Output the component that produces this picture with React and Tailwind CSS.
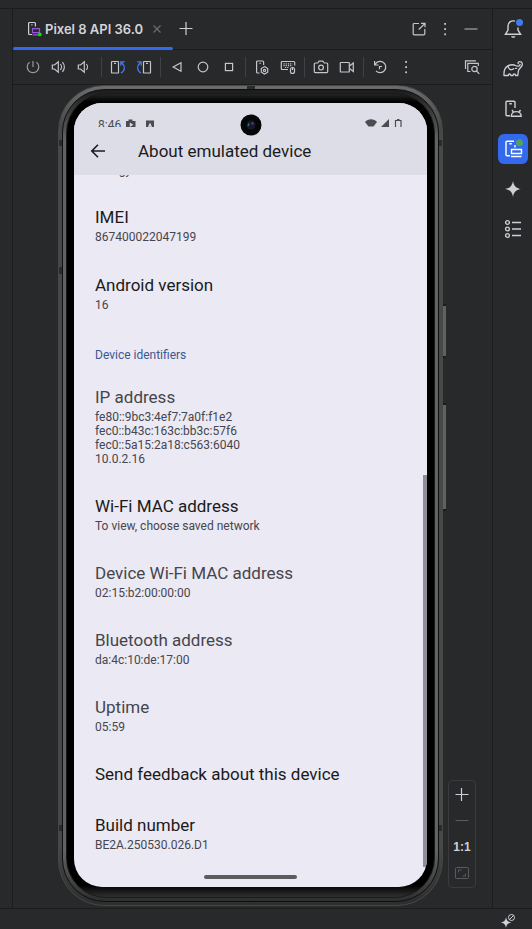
const F = "font-['Roboto','Noto_Sans',sans-serif]";

function Ic({ s = 16, children, className = '', w = 1.2 }) {
  return (
    <svg width={s} height={s} viewBox="0 0 16 16" fill="none" stroke="currentColor" strokeWidth={w} className={className} aria-hidden="true">
      {children}
    </svg>
  );
}

function ToolButton({ label, children, color = 'text-[#c4c6cb]' }) {
  return (
    <button aria-label={label} className={`flex size-4 shrink-0 items-center justify-center ${color}`}>
      {children}
    </button>
  );
}

function Group({ children }) {
  return <div className="flex items-center gap-[10px]">{children}</div>;
}

function Divider() {
  return <span className="h-5 w-px shrink-0 bg-[#404145]" />;
}

function KebabIcon() {
  return (
    <Ic>
      <g fill="currentColor" stroke="none">
        <rect x="7.2" y="2" width="1.8" height="1.8" />
        <rect x="7.2" y="7.2" width="1.8" height="1.8" />
        <rect x="7.2" y="12.4" width="1.8" height="1.8" />
      </g>
    </Ic>
  );
}

function TabHeader() {
  return (
    <header className="flex h-[41px] items-stretch border-b border-[#1b1c1e]">
      <div className="relative flex w-40 items-center gap-[2px] pl-[14px] text-[#ced0d6]">
        <Ic s={16}>
          <path d="M5 13.500H2.500c-.5 0-.9-.4-.9-.9V2.400c0-.5.4-.9.9-.9h5c.5 0 .9.4.9.9V5.500M4.300 3.800h1.200" />
          <path d="M5.500 7.700h7v4h-7zM5.500 13.800h6.500" stroke="#9457d6" />
          <circle cx="12.800" cy="13.400" r="1.900" fill="#0fdd0f" stroke="none" />
        </Ic>
        <span className="whitespace-nowrap text-[13px] leading-5 font-semibold text-[#d3d5da]">Pixel 8 API 36.0</span>
        <button aria-label="Close tab" className="ml-1 flex size-4 items-center justify-center text-[#6b6d72]">
          <Ic><path d="m4.500 4.500 7 7m0-7-7 7" /></Ic>
        </button>
        <span className="absolute inset-x-0 -bottom-px h-[3px] rounded-full bg-[#3369ec]" />
      </div>
      <button aria-label="New tab" className="ml-[3px] flex w-5 items-center justify-center text-[#ced0d6]">
        <Ic w={1.200}><path d="M1.500 7.500h13M8 1v13" /></Ic>
      </button>
      <div className="ml-auto flex items-center gap-[10px] pr-[13px]">
        <ToolButton label="Open in window">
          <Ic><path d="M8 2.500H3.200c-.6 0-1 .4-1 1v9.300c0 .6.4 1 1 1h9.600c.6 0 1-.4 1-1V8M10 2.300h4v4M14 2.300 7.800 8.500" /></Ic>
        </ToolButton>
        <ToolButton label="Options"><KebabIcon /></ToolButton>
        <ToolButton label="Hide" color="text-[#85878c]">
          <Ic w={1.600}><path d="M1.500 8h13" /></Ic>
        </ToolButton>
      </div>
    </header>
  );
}

function Toolbar() {
  return (
    <div className="flex h-[35px] items-center justify-between border-b border-[#1b1c1e] px-3">
      <div className="flex items-center gap-2">
        <Group>
          <ToolButton label="Power" color="text-[#9a9ca1]">
            <Ic><path d="M8 2v6M4.600 3.200a5.800 5.800 0 1 0 6.800 0" /></Ic>
          </ToolButton>
          <ToolButton label="Volume up">
            <Ic><path d="M1.300 6h2.200L7.300 2.800v10.400L3.500 10H1.300zM9.400 5.200c1.400 1.500 1.400 4.100 0 5.600M11.400 3.200c2.600 2.700 2.600 6.900 0 9.600" /></Ic>
          </ToolButton>
          <ToolButton label="Volume down">
            <Ic><path d="M1.300 6h2.200L7.300 2.800v10.400L3.500 10H1.300zM9.400 5.200c1.400 1.500 1.400 4.100 0 5.600" /></Ic>
          </ToolButton>
        </Group>
        <Divider />
        <Group>
          <ToolButton label="Rotate left">
            <Ic>
              <rect x="1.500" y="2.500" width="7" height="11.500" rx=".6" />
              <path d="M4 4.300h2" />
              <path d="M10.800 14c4.200-1.800 5-7 .6-10.300M10.800 6.800V2.800h4" stroke="#3f7cf0" />
            </Ic>
          </ToolButton>
          <ToolButton label="Rotate right">
            <Ic>
              <rect x="7.500" y="2.500" width="7" height="11.500" rx=".6" />
              <path d="M10 4.300h2" />
              <path d="M5.200 14C1 12.200.2 7 4.600 3.700M5.200 6.800V2.800h-4" stroke="#3f7cf0" />
            </Ic>
          </ToolButton>
        </Group>
        <Divider />
        <Group>
          <ToolButton label="Back"><Ic><path d="M12 3.800v8.400L4.200 8z" /></Ic></ToolButton>
          <ToolButton label="Home"><Ic><circle cx="8" cy="8" r="4.800" /></Ic></ToolButton>
          <ToolButton label="Overview"><Ic><rect x="4.400" y="4.400" width="7.200" height="7.200" /></Ic></ToolButton>
        </Group>
        <Divider />
        <Group>
          <ToolButton label="Device settings">
            <Ic>
              <path d="M5.500 14H3.500c-.5 0-.9-.4-.9-.9V2.900c0-.5.4-.9.900-.9h5.200c.5 0 .9.4.9.9V6M5.500 4.300h1.300" />
              <path d="m10.500 7.600 3.200 1.900v3.700l-3.200 1.900-3.200-1.900V9.500z" />
              <circle cx="10.500" cy="11.400" r="1.100" />
            </Ic>
          </ToolButton>
          <ToolButton label="Hardware input">
            <Ic>
              <path d="M8 10.500H2.300c-.6 0-1-.4-1-1v-6c0-.6.4-1 1-1h11.400c.6 0 1 .4 1 1v3" />
              <path d="M3.500 4.800h9M3.500 6.600h9M5 8.500h4" strokeDasharray="1.200 1" />
              <rect x="10.500" y="8.500" width="4" height="6" rx="2" />
              <path d="M12.500 8.500v2.500" />
            </Ic>
          </ToolButton>
        </Group>
        <Divider />
        <Group>
          <ToolButton label="Screenshot">
            <Ic>
              <path d="M1.300 5c0-.6.4-1 1-1h2.400l1.400-1.800h3.800L11.300 4h2.400c.6 0 1 .4 1 1v7.600c0 .6-.4 1-1 1H2.300c-.6 0-1-.4-1-1z" />
              <circle cx="8" cy="8.600" r="2.400" />
            </Ic>
          </ToolButton>
          <ToolButton label="Record screen">
            <Ic><rect x="1.300" y="3.500" width="9" height="9.500" rx=".6" /><path d="m10.500 7 3.800-3v8.500l-3.800-3" /></Ic>
          </ToolButton>
        </Group>
        <Divider />
        <Group>
          <ToolButton label="Restore">
            <Ic><path d="M2.600 2v4h4M3 5.800a5.600 5.600 0 1 1 1 6M7.500 10.200V7.500H10" /></Ic>
          </ToolButton>
          <ToolButton label="More actions"><KebabIcon /></ToolButton>
        </Group>
      </div>
      <ToolButton label="Inspect layout">
        <Ic>
          <path d="M1.500 10V1.800H12M6.500 12.500H3.800V4.300h10.500V7" />
          <circle cx="10.500" cy="10" r="2.700" />
          <path d="m12.500 12 2.800 2.800" />
        </Ic>
      </ToolButton>
    </div>
  );
}

function StatusBar() {
  return (
    <div className="flex h-6 items-start justify-between overflow-hidden px-6 pt-[14px] text-[#4b4b50]">
      <div className="flex items-start">
        <span className="text-[12px] leading-4">8:46</span>
        <svg width="32" height="12" viewBox="0 0 32 12" className="mt-[2px] ml-1" aria-hidden="true">
          <path d="M1 2h2.500V.5h4V2H10.500v8H1zM4.800 3.500v4.500l3.500-2.200z" fill="currentColor" fillRule="evenodd" />
          <path d="M21 1.500h8v9h-8zM25 3.500l-2.500 5.500h1l.5-1.200h2l.5 1.200h1z" fill="currentColor" fillRule="evenodd" />
        </svg>
      </div>
      <svg width="38" height="9" viewBox="0 0 38 9" className="mt-px" aria-hidden="true">
        <path d="M0 4C3 .3 9 .3 12 4L8.500 8.500h-5z" fill="currentColor" />
        <path d="M16 9 24 1v8z" fill="currentColor" />
        <path d="M30.500 9V2.500h5.500V9M32 1.500h2.500" fill="none" stroke="currentColor" strokeWidth="1.200" />
      </svg>
    </div>
  );
}

function Row({ title, lines = [], muted }) {
  return (
    <div className="flex flex-col gap-[2px]">
      <dt className={`text-[17px] leading-[22px] ${muted ? 'text-[#45454d]' : 'text-[#1a1a20]'}`}>{title}</dt>
      {lines.length > 0 && (
        <dd className="text-[12px] leading-[14px] text-[#46464f]">
          {lines.map((l) => <span key={l} className="block">{l}</span>)}
        </dd>
      )}
    </div>
  );
}

function DeviceScreen() {
  return (
    <main className={`relative flex flex-1 flex-col overflow-hidden rounded-[28px] bg-[#ebe9f3] ${F}`}>
      <div className="bg-[#dddde8]">
        <StatusBar />
        <div className="flex h-12 items-center gap-8 pl-4">
          <button aria-label="Navigate up" className="flex size-4 items-center justify-center text-[#1a1a20]">
            <Ic w={1.600}><path d="M15 8H2M8 1.800 1.800 8 8 14.200" /></Ic>
          </button>
          <h1 className="text-[17px] leading-6 text-[#1a1a20]">About emulated device</h1>
        </div>
      </div>
      <div className="h-[2px] overflow-hidden pl-[21px]">
        <p className="-mt-3 text-[12px] leading-[14px] text-[#46464f]">Energy</p>
      </div>
      <dl className="flex flex-col gap-[30px] px-[21px] pt-[29px]">
        <Row title="IMEI" lines={['867400022047199']} />
        <Row title="Android version" lines={['16']} />
      </dl>
      <h2 className="px-[21px] pt-9 pb-6 text-[12px] leading-[14px] text-[#3c5891]">Device identifiers</h2>
      <dl className="flex flex-col gap-[29px] px-[21px]">
        <Row muted title="IP address" lines={['fe80::9bc3:4ef7:7a0f:f1e2', 'fec0::b43c:163c:bb3c:57f6', 'fec0::5a15:2a18:c563:6040', '10.0.2.16']} />
        <Row title="Wi-Fi MAC address" lines={['To view, choose saved network']} />
        <Row muted title="Device Wi-Fi MAC address" lines={['02:15:b2:00:00:00']} />
        <Row muted title="Bluetooth address" lines={['da:4c:10:de:17:00']} />
        <Row muted title="Uptime" lines={['05:59']} />
        <Row title="Send feedback about this device" />
        <Row title="Build number" lines={['BE2A.250530.026.D1']} />
      </dl>
      <span className="mx-auto mt-auto mb-2 h-1 w-[93px] rounded-full bg-[#5c5c60]" />
      <span className="absolute right-0 bottom-5 h-1/2 w-1 bg-[#8f8e96]" />
      <svg width="22" height="22" viewBox="0 0 22 22" className="absolute top-[11px] left-1/2 -translate-x-1/2" aria-hidden="true">
        <circle cx="11" cy="11" r="10.500" fill="#050607" />
        <circle cx="11" cy="11" r="4.500" fill="#171a26" />
        <path d="M9 9.500 8 12" stroke="#3a78a8" strokeWidth="1.200" />
        <circle cx="12.500" cy="9.500" r="1.200" fill="#5b3a80" />
      </svg>
    </main>
  );
}

function Phone() {
  const notch = 'absolute bg-[#2a2b2b]';
  return (
    <div className="relative flex w-full max-w-[385px] flex-col rounded-[46px] border border-[#464747] bg-[linear-gradient(to_bottom,#6c6c6c_0,#474848_40px,#474848_calc(100%-60px),#2c2d2d_100%)] p-[3px]">
      <div className="flex flex-1 flex-col rounded-[43px] border border-[#101010] bg-[linear-gradient(to_bottom,#1c1c1c_0,#626262_50px,#626262_calc(100%-50px),#2e2e2e_100%)] p-[3px]">
        <div className="flex flex-1 flex-col rounded-[40px] border border-[#1a1a1a] bg-[linear-gradient(to_bottom,#242424_0,#000_8px,#000_calc(100%-12px),#303030_100%)] px-[7px] pt-[9px] pb-[10px]">
          <DeviceScreen />
        </div>
      </div>
      <span className={`${notch} top-[54px] left-0 h-[6px] w-[3px]`} />
      <span className={`${notch} top-[54px] right-0 h-[6px] w-[3px]`} />
      <span className={`${notch} top-[181px] left-0 h-[7px] w-[3px]`} />
      <span className={`${notch} bottom-[74px] left-0 h-[6px] w-[3px]`} />
      <span className={`${notch} right-0 bottom-[74px] h-[6px] w-[3px]`} />
      <span className={`${notch} top-0 left-1/2 h-[3px] w-2 -translate-x-1/2`} />
      <span className="absolute top-[218px] -right-1 h-[54px] w-[3px] border-y-2 border-[#1b1b1b] bg-[#606161]" />
      <span className="absolute top-[317px] -right-1 h-[108px] w-[3px] border-y-2 border-[#1b1b1b] bg-[#606161]" />
    </div>
  );
}

function ZoomControls() {
  return (
    <div className="absolute right-4 bottom-5 flex w-7 flex-col items-center gap-[10px] rounded border border-[#3a3b3e] py-[6px] text-[#ced0d6]">
      <button aria-label="Zoom in"><Ic w={1.200}><path d="M1.500 7.500h13M7.500 1v13" /></Ic></button>
      <button aria-label="Zoom out" className="text-[#5a5c61]"><Ic w={1}><path d="M1.500 7.500h13" /></Ic></button>
      <button className="font-['Liberation_Sans',sans-serif] text-[12px] leading-4 font-bold">1:1</button>
      <button aria-label="Fit to screen" className="text-[#5a5c61]">
        <Ic w={1}><rect x="1.500" y="2.500" width="13" height="11" rx="1" /><path d="M4.500 7.500v-2.500h3M11.500 8.500V11h-3" /></Ic>
      </button>
    </div>
  );
}

function SideBar() {
  const b = 'flex size-[30px] items-center justify-center rounded-md';
  return (
    <nav aria-label="Tool windows" className="flex w-10 shrink-0 flex-col items-center gap-[10px] border-l border-[#1b1c1e] pt-[5px] text-[#ced0d6]">
      <button aria-label="Notifications" className={b}>
        <svg width="20" height="20" viewBox="0 0 20 20" fill="none" stroke="currentColor" strokeWidth="1.400" aria-hidden="true">
          <path d="M12 2.200C8 1 5 3.500 5 7v4l-2.600 4.300h15.200L15 11V8.500" />
          <path d="M8 17.300h4.500l-1 1.500H9z" fill="currentColor" stroke="none" />
          <circle cx="16.500" cy="3.600" r="3.500" fill="#3f7cf0" stroke="none" />
        </svg>
      </button>
      <button aria-label="Gradle" className={b}>
        <svg width="20" height="20" viewBox="0 0 20 20" fill="none" stroke="currentColor" strokeWidth="1.300" strokeLinejoin="round" strokeLinecap="round" aria-hidden="true">
          <path d="M15.200 4.700c-.3-1.400.8-2.200 1.900-2.100 1.500.1 2.400 1.400 2.200 3-.3 2.700-3.300 3.400-3.900 6.200l-.6 4.700h-2.300c-.1-2-2.400-2-2.500 0H7.800c-.1-2-2.400-2-2.500 0H1C.7 12.500 2 8.300 5 6.800c2.500-1.200 5.500-1.300 7.500-.3 1.800.9 4.600.9 4.600-1" />
          <path d="M5 7c.2 3.200 3.300 4.700 5.800 2.800M12.600 9.300h1" />
        </svg>
      </button>
      <button aria-label="Device manager" className={b}>
        <svg width="20" height="20" viewBox="0 0 20 20" fill="none" stroke="currentColor" strokeWidth="1.400" aria-hidden="true">
          <path d="M7 16.800H4c-.6 0-1-.4-1-1V3.200c0-.6.4-1 1-1h7c.6 0 1 .4 1 1V9M6.300 4.800h2.500" />
          <path d="M8.300 17.300c0-6.300 9.900-6.300 9.900 0zM10.300 13 9 11M16.200 13l1.300-2" />
        </svg>
      </button>
      <button aria-label="Running devices" className={`${b} bg-[#3369ec]`}>
        <svg width="20" height="20" viewBox="0 0 20 20" fill="none" stroke="#fff" strokeWidth="1.400" aria-hidden="true">
          <path d="M7 16.800H4c-.6 0-1-.4-1-1V3.200c0-.6.4-1 1-1h7M6.300 4.800h2.500M12 6v2.500" />
          <path d="M8.500 10.500h10v4h-10zM8 17.500h10.500" />
          <circle cx="16.500" cy="3.800" r="3.500" fill="#55a05a" stroke="none" />
        </svg>
      </button>
      <button aria-label="Gemini" className={b}>
        <svg width="16" height="16" viewBox="0 0 16 16" fill="currentColor" aria-hidden="true">
          <path d="M8 0c.8 5 3 7.200 8 8-5 .8-7.200 3-8 8-.8-5-3-7.200-8-8 5-.8 7.200-3 8-8z" />
        </svg>
      </button>
      <button aria-label="Structure" className={b}>
        <svg width="18" height="20" viewBox="0 0 18 20" fill="none" stroke="currentColor" strokeWidth="1.400" aria-hidden="true">
          <circle cx="3.500" cy="3.500" r="1.900" /><circle cx="3.500" cy="10" r="1.900" /><circle cx="3.500" cy="16.500" r="1.900" />
          <path d="M8 3.500h9M8 10h9M8 16.500h9" />
        </svg>
      </button>
    </nav>
  );
}

export default function App() {
  return (
    <div className="flex min-h-screen flex-col bg-[#28292b] font-['Inter','Liberation_Sans',sans-serif]">
      <div className="h-[9px] border-b border-[#1b1c1e]" />
      <div className="flex flex-1">
        <div className="w-[13px] shrink-0 border-r border-[#1b1c1e]" />
        <div className="flex min-w-0 flex-1 flex-col">
          <TabHeader />
          <Toolbar />
          <div className="relative flex flex-1 justify-center pr-1 pb-[2px]">
            <Phone />
            <ZoomControls />
          </div>
        </div>
        <SideBar />
      </div>
      <footer className="flex h-[21px] items-center justify-end border-t border-[#1b1c1e] pt-1 pr-4">
        <svg width="16" height="16" viewBox="0 0 16 16" className="text-[#ced0d6]" aria-hidden="true">
          <path d="M6 4c.5 3.500 2 5 5.500 5.500C8 10 6.500 11.500 6 15c-.5-3.500-2-5-5.500-5.500C4 9 5.500 7.500 6 4z" fill="currentColor" />
          <circle cx="11.500" cy="4.500" r="3" fill="#28292b" stroke="currentColor" />
          <path d="m9.500 6.500 4-4" stroke="currentColor" />
        </svg>
      </footer>
    </div>
  );
}
